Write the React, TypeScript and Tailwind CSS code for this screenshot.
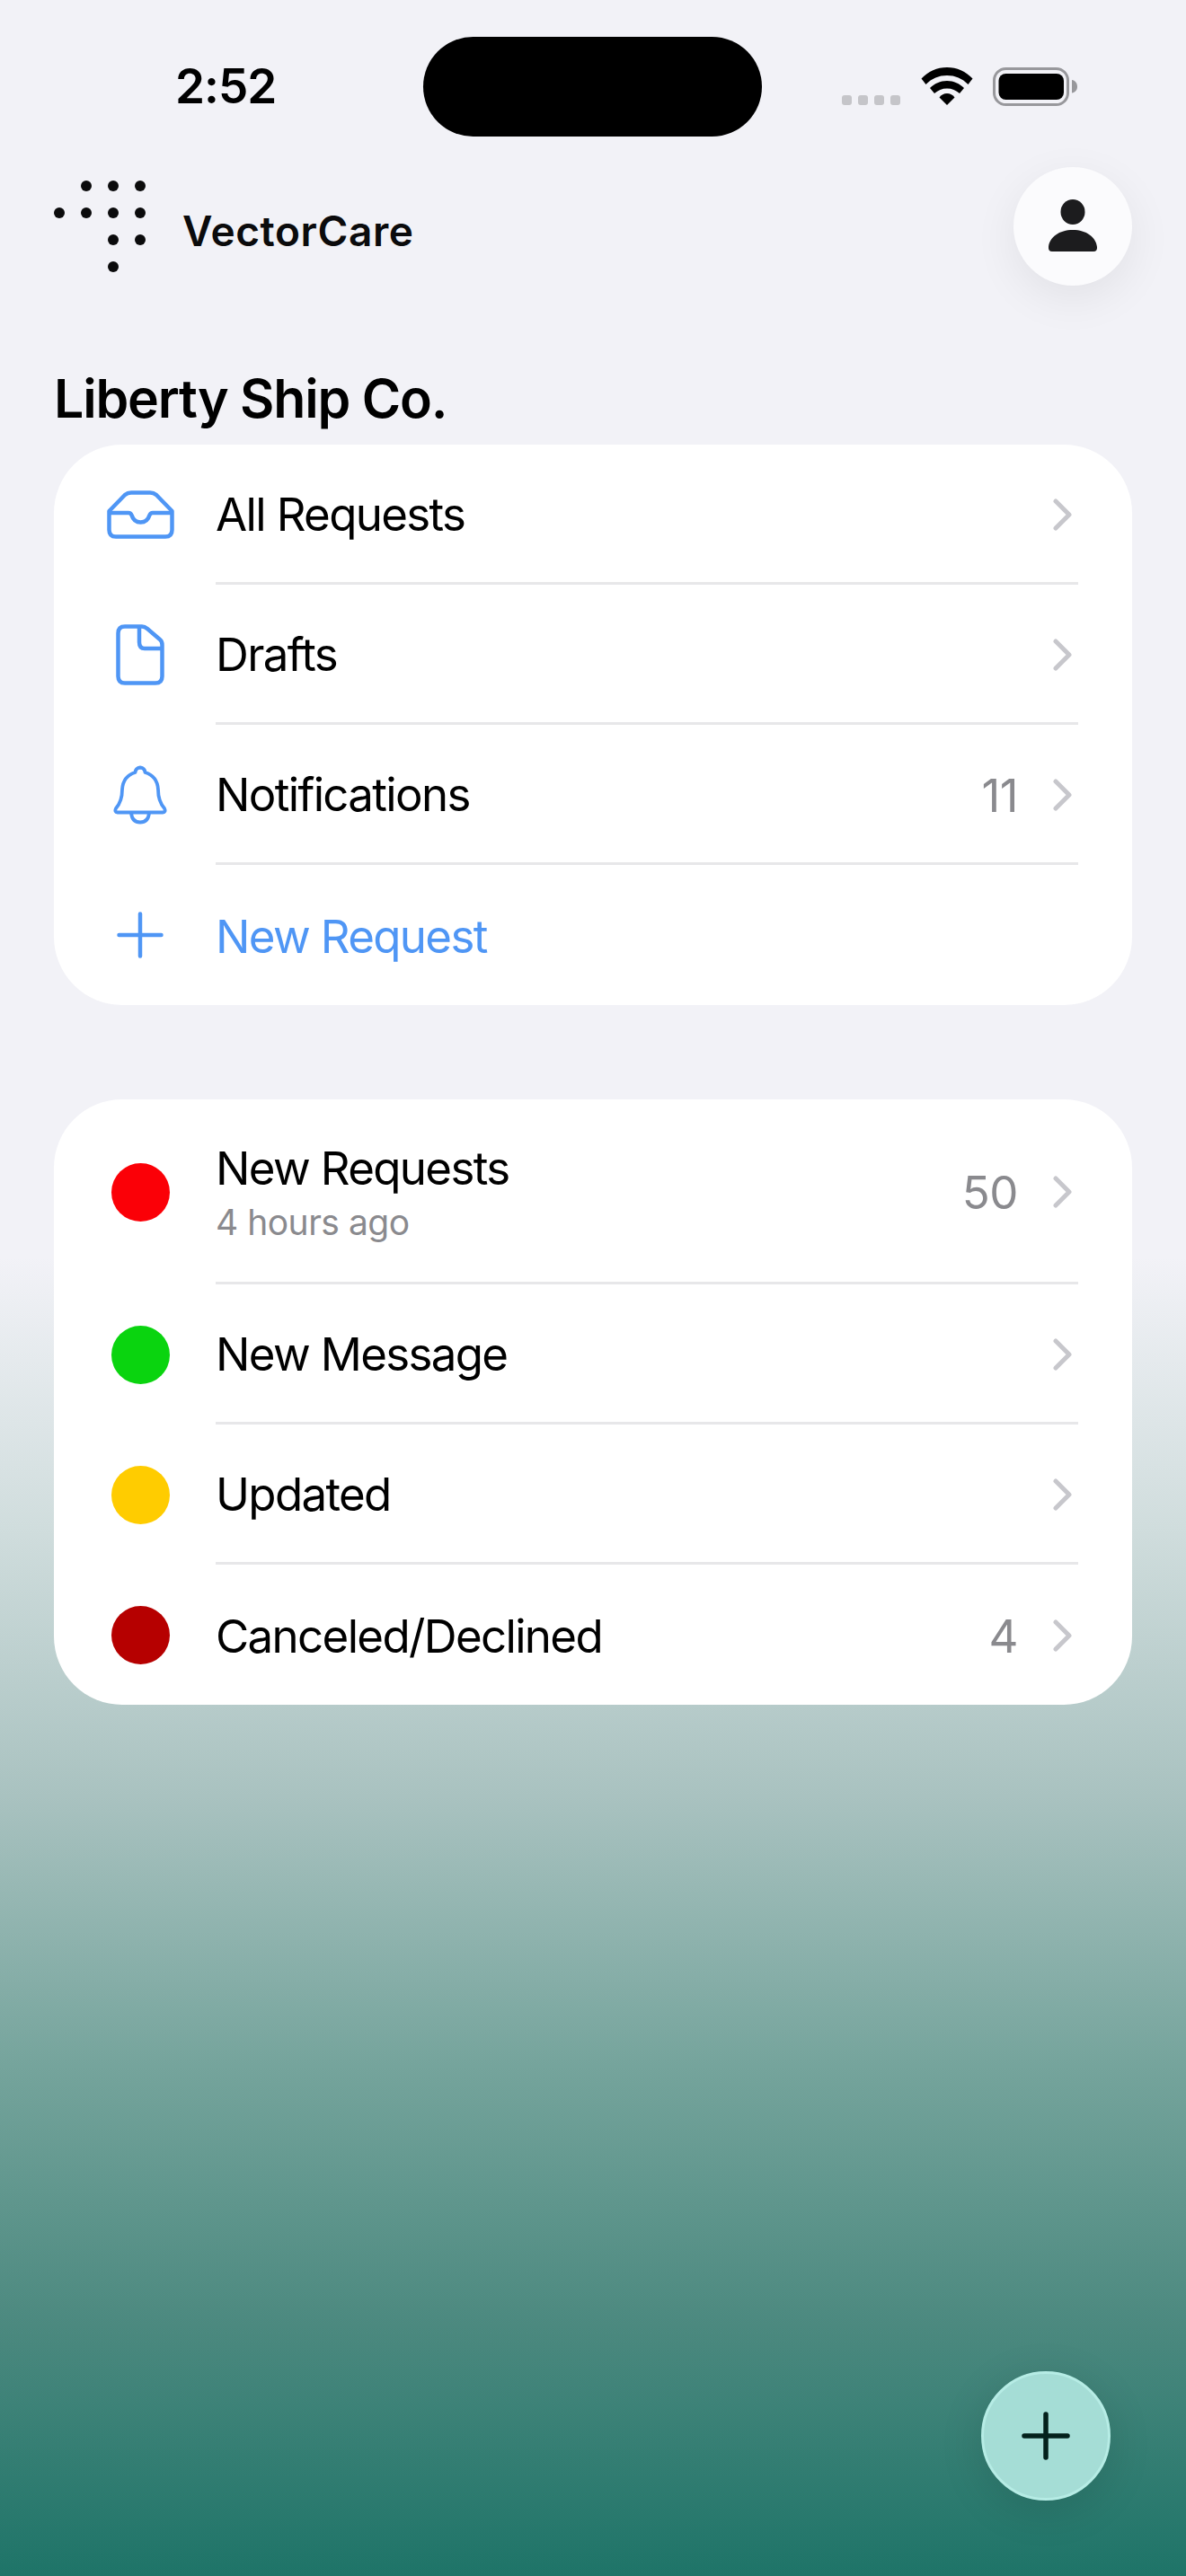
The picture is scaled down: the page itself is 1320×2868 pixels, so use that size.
import type { ReactNode } from 'react';

const dots = [
  [96, 207], [126, 207], [156, 207],
  [66, 237], [96, 237], [126, 237], [156, 237],
  [126, 267], [156, 267],
  [126, 297],
];

function StatusBar() {
  return (
    <div className="flex h-[152px] pt-[41px]">
      <div className="w-[471px] h-[111px] flex items-center pl-[195px]">
        <span className="text-[53px] leading-none font-semibold text-black tracking-[-1px]">2:52</span>
      </div>
      <div className="w-[377px] h-[111px] rounded-full bg-black" />
      <div className="flex-1 flex items-start pl-[89px] pt-[34px]">
        <div className="flex gap-[7px] mt-[31px]">
          <span className="w-[11px] h-[11px] rounded-[3px] bg-[#c5c5c9]" />
          <span className="w-[11px] h-[11px] rounded-[3px] bg-[#c5c5c9]" />
          <span className="w-[11px] h-[11px] rounded-[3px] bg-[#c5c5c9]" />
          <span className="w-[11px] h-[11px] rounded-[3px] bg-[#c5c5c9]" />
        </div>
        <svg className="ml-[23px]" width="58" height="42" viewBox="0 0 58 42" fill="#000">
          <path d="M29 0C18 0 8 4.5 0.5 12.5L5.5 19C12 12.3 20 9 29 9C38 9 46 12.3 52.5 19L57.5 12.5C50 4.5 40 0 29 0Z" />
          <path d="M29 15C21.5 15 15 18 10 23L15 29C19 25.5 23.5 23.5 29 23.5C34.5 23.5 39 25.5 43 29L48 23C43 18 36.5 15 29 15Z" />
          <path d="M29 29C25.5 29 22.5 30.5 20.5 33.5L29 42L37.5 33.5C35.5 30.5 32.5 29 29 29Z" />
        </svg>
        <svg className="ml-[22px]" width="94" height="43" viewBox="0 0 94 43">
          <rect x="1.5" y="1.5" width="82" height="40" rx="13" fill="none" stroke="#98989c" strokeWidth="3" />
          <rect x="6.5" y="7" width="72.5" height="29" rx="8" fill="#000" />
          <path d="M88 14C91.5 14.5 94 17.5 94 21.5C94 25.5 91.5 28 88 28.5Z" fill="#98989c" />
        </svg>
      </div>
    </div>
  );
}

function Header() {
  return (
    <div className="flex items-start justify-between mt-[34px] px-[60px]">
      <div className="flex items-start">
        <svg className="mt-[15px]" width="104" height="102" viewBox="60 201 104 102" fill="#0b0b0c">
          {dots.map(([x, y]) => (
            <circle key={`${x}-${y}`} cx={x} cy={y} r="6" />
          ))}
        </svg>
        <span className="ml-[39px] mt-[44px] text-[46px] leading-[54px] font-semibold text-[#0b0b0c] tracking-[0.6px]">
          VectorCare
        </span>
      </div>
      <button
        type="button"
        className="w-[132px] h-[132px] rounded-full bg-[#fbfbfd] flex items-center justify-center shadow-[0_14px_50px_rgba(0,0,0,0.07)]"
      >
        <svg width="56" height="60" viewBox="0 0 56 60" fill="#1c1c1e">
          <ellipse cx="28" cy="14" rx="13.5" ry="14" />
          <path d="M1 53C2 42 13 34 28 34C43 34 54 42 55 53C55.3 56 54 58 51 58H5C2 58 0.7 56 1 53Z" />
        </svg>
      </button>
    </div>
  );
}

function Chevron() {
  return (
    <svg className="mt-[2px]" width="21" height="36" viewBox="0 0 21 36" fill="none" stroke="#c7c7cc" strokeWidth="5" strokeLinecap="round" strokeLinejoin="round">
      <path d="M3 3L18 18L3 33" />
    </svg>
  );
}

function Row({
  icon,
  label,
  sub,
  count,
  blue,
  last,
  tall,
}: {
  icon: ReactNode;
  label: string;
  sub?: string;
  count?: string;
  blue?: boolean;
  last?: boolean;
  tall?: boolean;
}) {
  return (
    <div className={`flex ${tall ? 'h-[206px]' : 'h-[156px]'}`}>
      <div className="w-[180px] flex items-center justify-center pl-[12px] shrink-0">{icon}</div>
      <div className={`flex-1 mr-[60px] flex items-center pr-[7px] ${last ? '' : 'border-b-[3px] border-[#e7e7e9]'}`}>
        <div className="flex-1 min-w-0 pt-[3px]">
          <div className={`text-[51px] leading-[62px] tracking-[-1.65px] ${blue ? 'text-[#4f96f5]' : 'text-black'}`}>{label}</div>
          {sub && <div className="mt-[5px] text-[39px] leading-[48px] text-[#8a8a8e] tracking-[-0.5px]">{sub}</div>}
        </div>
        {count && <span className="mr-[39px] pt-[3px] text-[51px] leading-none text-[#8a8a8e] tracking-[-0.5px]">{count}</span>}
        {!blue && <Chevron />}
      </div>
    </div>
  );
}

function InboxIcon() {
  return (
    <svg width="75" height="54" viewBox="0 0 75 54" fill="none" stroke="#4f96f5" strokeWidth="4.5" strokeLinejoin="round">
      <path d="M2.5 23L20 5Q23 2.5 27 2.5H48Q52 2.5 55 5L72.5 23V44Q72.5 51.5 65 51.5H10Q2.5 51.5 2.5 44Z" />
      <path d="M2.5 25H24Q26.5 25 27.5 27.5Q30 35.5 37.5 35.5Q45 35.5 47.5 27.5Q48.5 25 51 25H72.5" />
    </svg>
  );
}

function DraftIcon() {
  return (
    <svg width="54" height="68" viewBox="0 0 54 68" fill="none" stroke="#4f96f5" strokeWidth="4.5" strokeLinejoin="round">
      <path d="M10 2.5H29Q32 2.5 35 5L49 17Q51.5 19 51.5 23V58Q51.5 65.5 44 65.5H10Q2.5 65.5 2.5 58V10Q2.5 2.5 10 2.5Z" />
      <path d="M26 3V20Q26 27 32 27H51" />
    </svg>
  );
}

function BellIcon() {
  return (
    <svg width="60" height="66" viewBox="0 0 60 66" fill="none" stroke="#4f96f5" strokeWidth="3.8" strokeLinejoin="round">
      <path d="M30 2.5Q25 3 24.5 8Q11 12 10 27Q10 40 3 48Q1 52 5 52.5H55Q59 52 57 48Q50 40 50 27Q49 12 35.5 8Q35 3 30 2.5Z" />
      <path d="M20 53Q21 63.5 30 63.5Q39 63.5 40 53" />
    </svg>
  );
}

function PlusIcon() {
  return (
    <svg width="52" height="52" viewBox="0 0 52 52" fill="none" stroke="#4f96f5" strokeWidth="4.5" strokeLinecap="round">
      <path d="M26 2.5V49.5M2.5 26H49.5" />
    </svg>
  );
}

function Dot({ color }: { color: string }) {
  return <span className={`block w-[65px] h-[65px] rounded-full ${color}`} />;
}

export default function App() {
  return (
    <div className="relative h-[2868px] overflow-hidden font-['Inter',sans-serif] bg-[linear-gradient(180deg,#f2f2f7_0,#f2f2f7_1400px,#d0dddd_1700px,#a9c2c0_2000px,#75a49c_2300px,#4a887e_2600px,#1e7468_2868px)]">
      <StatusBar />
      <Header />

      <div className="px-[60px]">
        <h1 className="mt-[91px] text-[59px] leading-[70px] font-semibold text-black tracking-[-1.2px]">Liberty Ship Co.</h1>

        <div className="mt-[16px] rounded-[76px] bg-white overflow-hidden">
          <Row icon={<InboxIcon />} label="All Requests" />
          <Row icon={<DraftIcon />} label="Drafts" />
          <Row icon={<BellIcon />} label="Notifications" count="11" />
          <Row icon={<PlusIcon />} label="New Request" blue last />
        </div>

        <div className="mt-[105px] rounded-[76px] bg-white overflow-hidden">
          <Row icon={<Dot color="bg-[#fb0007]" />} label="New Requests" sub="4 hours ago" count="50" tall />
          <Row icon={<Dot color="bg-[#0ad40f]" />} label="New Message" />
          <Row icon={<Dot color="bg-[#ffcc00]" />} label="Updated" />
          <Row icon={<Dot color="bg-[#b60000]" />} label="Canceled/Declined" count="4" last />
        </div>
      </div>

      <button
        type="button"
        className="absolute left-[1092px] top-[2640px] w-[144px] h-[144px] rounded-full bg-[#a5ddd6] border-[3px] border-[#b6ece5] flex items-center justify-center shadow-[0_10px_50px_rgba(0,0,0,0.12)]"
      >
        <svg width="54" height="54" viewBox="0 0 54 54" fill="none" stroke="#03211c" strokeWidth="5.5" strokeLinecap="round">
          <path d="M27 3V51M3 27H51" />
        </svg>
      </button>
    </div>
  );
}
